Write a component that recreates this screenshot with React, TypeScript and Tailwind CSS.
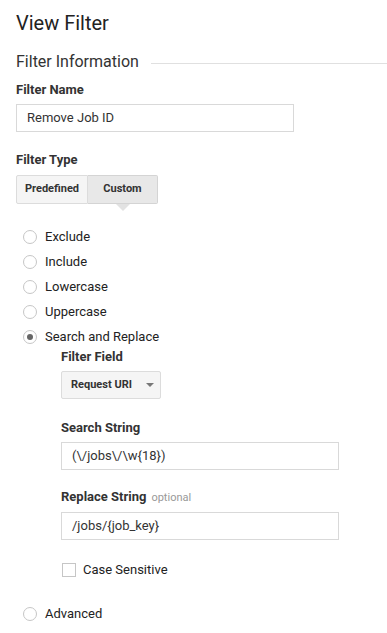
import React from 'react'

function Radio({ label, checked = false }: { label: string; checked?: boolean }) {
  return (
    <div className="flex items-center h-[25px]">
      <span className="w-[14px] h-[14px] rounded-full border border-[#c6c6c6] bg-white flex items-center justify-center ml-[23px]">
        {checked && <span className="w-[6px] h-[6px] rounded-full bg-[#666]" />}
      </span>
      <span className="ml-[8px] text-[13px] text-[#222]">{label}</span>
    </div>
  )
}

function TextBox({ value, width }: { value: string; width: string }) {
  return (
    <div className={`${width} h-[28px] border border-[#d9d9d9] bg-white flex items-center px-[10px] text-[13px] text-[#333]`}>
      {value}
    </div>
  )
}

export default function App() {
  return (
    <div className="w-[387px] h-[633px] bg-white overflow-hidden font-['Roboto',sans-serif] text-[#222]">
      <h1 className="pl-[16px] pt-[10px] text-[20px] leading-[26px] text-[#222]">View Filter</h1>

      <div className="flex items-center pl-[16px] mt-[16px]">
        <span className="text-[16px] leading-[20px] text-[#333]">Filter Information</span>
        <span className="flex-1 ml-[12px] h-px bg-[#e0e0e0] mt-[3px]" />
      </div>

      <div className="pl-[16px] mt-[9px]">
        <div className="text-[13px] font-bold leading-[18px] text-[#333]">Filter Name</div>
        <div className="mt-[5px]">
          <TextBox value="Remove Job ID" width="w-[278px]" />
        </div>

        <div className="text-[13px] font-bold leading-[18px] text-[#333] mt-[19px]">Filter Type</div>
        <div className="flex mt-[6px]">
          <div className="h-[29px] w-[72px] flex items-center justify-center border border-[#dcdcdc] bg-[#f5f5f5] text-[11px] font-bold text-[#333] rounded-l-[2px]">
            Predefined
          </div>
          <div className="relative h-[29px] w-[70px] flex items-center justify-center border border-l-0 border-[#d4d4d4] bg-[#e8e8e8] text-[11px] font-bold text-[#333] rounded-r-[2px]">
            Custom
            <span className="absolute left-[28px] top-[28px] w-0 h-0 border-l-[7px] border-r-[7px] border-t-[7px] border-l-transparent border-r-transparent border-t-[#e2e2e2]" />
          </div>
        </div>
      </div>

      <div className="mt-[20px]">
        <Radio label="Exclude" />
        <Radio label="Include" />
        <Radio label="Lowercase" />
        <Radio label="Uppercase" />
        <Radio label="Search and Replace" checked />

        <div className="pl-[61px]">
          <div className="text-[13px] font-bold leading-[18px] text-[#333] -mt-[1px]">Filter Field</div>
          <div className="mt-[5px] w-[100px] h-[28px] border border-[#dcdcdc] bg-[#f5f5f5] rounded-[2px] flex items-center pl-[9px] text-[11px] font-bold text-[#333]">
            Request URI
            <span className="ml-[14px] w-0 h-0 border-l-[4px] border-r-[4px] border-t-[4px] border-l-transparent border-r-transparent border-t-[#777]" />
          </div>

          <div className="text-[13px] font-bold leading-[18px] text-[#333] mt-[20px]">Search String</div>
          <div className="mt-[5px]">
            <TextBox value="(\/jobs\/\w{18})" width="w-[278px]" />
          </div>

          <div className="flex items-baseline mt-[18px] leading-[18px]">
            <span className="text-[13px] font-bold text-[#333]">Replace String</span>
            <span className="ml-[5px] text-[11px] text-[#999]">optional</span>
          </div>
          <div className="mt-[5px]">
            <TextBox value="/jobs/{job_key}" width="w-[278px]" />
          </div>

          <div className="flex items-center mt-[22px] h-[16px]">
            <span className="w-[14px] h-[14px] border border-[#c6c6c6] bg-white ml-[1px]" />
            <span className="ml-[7px] text-[13px] text-[#222]">Case Sensitive</span>
          </div>
        </div>

        <div className="mt-[23px]">
          <Radio label="Advanced" />
        </div>
      </div>
    </div>
  )
}
